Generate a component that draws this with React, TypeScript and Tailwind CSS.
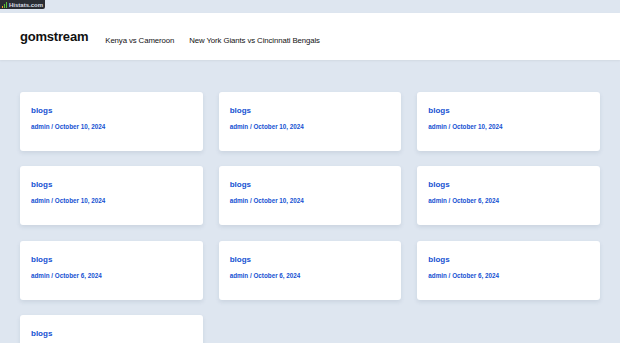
import React from 'react';

const posts = [
  'October 10, 2024',
  'October 10, 2024',
  'October 10, 2024',
  'October 10, 2024',
  'October 10, 2024',
  'October 6, 2024',
  'October 6, 2024',
  'October 6, 2024',
  'October 6, 2024',
  'October 6, 2024',
];

export default function App() {
  return (
    <div className="relative h-[343px] bg-[#dee6f0] font-['Liberation_Sans',Arial,sans-serif] overflow-hidden">
      {/* stats badge */}
      <div className="absolute left-0 top-0 z-10 flex h-[9px] items-center gap-[2px] rounded-br-[2px] bg-[#2a2d33] px-[2px]">
        <svg width="5" height="6" viewBox="0 0 5 6">
          <rect x="0" y="4" width="1" height="2" fill="#f5a623" />
          <rect x="2" y="2" width="1" height="4" fill="#57c23a" />
          <rect x="4" y="0" width="1" height="6" fill="#57c23a" />
        </svg>
        <span className="text-[6px] leading-none font-bold text-[#d8dde4]">Histats.com</span>
      </div>

      <header className="mt-[13px] flex h-[47px] items-center bg-white px-[20px] shadow-[0_1px_2px_rgba(0,0,0,0.06)]">
        <span className="text-[13px] font-bold text-[#111] tracking-[-0.2px]">gomstream</span>
        <nav className="ml-[17px] mt-[8px] flex gap-[15px] text-[7.8px] font-medium text-[#111] tracking-[-0.1px]">
          <a>Kenya vs Cameroon</a>
          <a>New York Giants vs Cincinnati Bengals</a>
        </nav>
      </header>

      {/* posts */}
      <main className="grid grid-cols-3 gap-x-[16px] gap-y-[15.4px] px-[20px] pt-[32px]">
        {posts.map((date, i) => (
          <div key={i} className="h-[59px] rounded-[3px] bg-white px-[11px] pt-[14px] shadow-[0_2px_4px_rgba(60,80,110,0.12)]">
            <div className="text-[8px] leading-[10px] font-bold text-[#1551d2]">blogs</div>
            <div className="mt-[7px] text-[6.3px] leading-[8px] font-bold text-[#1551d2]">admin / {date}</div>
          </div>
        ))}
      </main>
    </div>
  );
}
